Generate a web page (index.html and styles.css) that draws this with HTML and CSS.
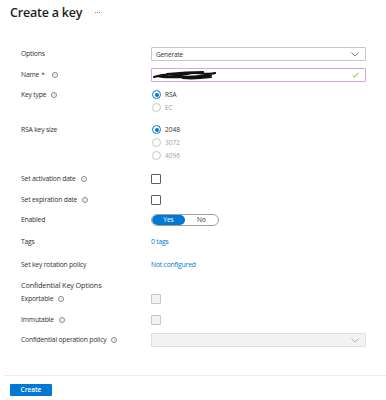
FILE: index.html
```html
<!DOCTYPE html>
<html>
<head>
<meta charset="utf-8">
<link rel="stylesheet" href="styles.css">
</head>
<body>
<div class="page">
  <div class="header">
    <h1 class="title">Create a key</h1>
    <span class="more"><i></i><i></i><i></i></span>
  </div>

  <div class="form">
    <div class="row r-options">
      <div class="label">Options</div>
      <div class="control">
        <div class="select"><span>Generate</span>
          <svg class="chev" viewBox="0 0 10 6" width="8" height="5"><path d="M0.5 0.5 L5 5 L9.5 0.5" fill="none" stroke="#605e5c" stroke-width="1"/></svg>
        </div>
      </div>
    </div>

    <div class="row r-name">
      <div class="label">Name <span class="req">*</span> <span class="info">i</span></div>
      <div class="control">
        <div class="input">
          <svg class="redact" viewBox="0 0 70 10" width="70" height="10"><path d="M1 7 C8 5 14 4 22 5 C30 6 34 3 42 3 C50 3 56 5 62 3 M4 6 C12 8 20 7 30 7 C40 7 48 6 58 5 M14 4 C24 3 36 2 50 2 M30 8 C40 9 50 8 58 7" fill="none" stroke="#111" stroke-width="2.2" stroke-linecap="round"/></svg>
          <svg class="check" viewBox="0 0 10 8" width="7" height="6"><path d="M1 4.5 L3.8 7 L9 1" fill="none" stroke="#57a300" stroke-width="1.2"/></svg>
        </div>
      </div>
    </div>

    <div class="row r-keytype">
      <div class="label">Key type <span class="info">i</span></div>
      <div class="control stack">
        <div class="radio checked"><span class="dot"></span>RSA</div>
        <div class="radio disabled"><span class="dot"></span>EC</div>
      </div>
    </div>

    <div class="row r-keysize">
      <div class="label">RSA key size</div>
      <div class="control stack">
        <div class="radio checked"><span class="dot"></span>2048</div>
        <div class="radio disabled"><span class="dot"></span>3072</div>
        <div class="radio disabled"><span class="dot"></span>4096</div>
      </div>
    </div>

    <div class="row r-act">
      <div class="label">Set activation date <span class="info">i</span></div>
      <div class="control"><span class="box"></span></div>
    </div>

    <div class="row r-exp">
      <div class="label">Set expiration date <span class="info">i</span></div>
      <div class="control"><span class="box"></span></div>
    </div>

    <div class="row r-enabled">
      <div class="label">Enabled</div>
      <div class="control">
        <div class="toggle"><span class="opt on">Yes</span><span class="opt">No</span></div>
      </div>
    </div>

    <div class="row r-tags">
      <div class="label">Tags</div>
      <div class="control"><span class="link">0 tags</span></div>
    </div>

    <div class="row r-rot">
      <div class="label">Set key rotation policy</div>
      <div class="control"><span class="link">Not configured</span></div>
    </div>

    <div class="section">Confidential Key Options</div>

    <div class="row r-export">
      <div class="label">Exportable <span class="info">i</span></div>
      <div class="control"><span class="box dis"></span></div>
    </div>

    <div class="row r-immut">
      <div class="label">Immutable <span class="info">i</span></div>
      <div class="control"><span class="box dis"></span></div>
    </div>

    <div class="row r-policy">
      <div class="label">Confidential operation policy <span class="info">i</span></div>
      <div class="control">
        <div class="select dis">
          <svg class="chev" viewBox="0 0 10 6" width="8" height="5"><path d="M0.5 0.5 L5 5 L9.5 0.5" fill="none" stroke="#a19f9d" stroke-width="1"/></svg>
        </div>
      </div>
    </div>
  </div>

  <div class="footer">
    <button class="btn">Create</button>
  </div>
</div>
</body>
</html>
```

FILE: styles.css
```css
* { box-sizing: border-box; }
html, body { margin: 0; padding: 0; background: #fff; }
body {
  font-family: "Open Sans", "Noto Sans", "Liberation Sans", sans-serif;
  color: #323130;
  width: 386px;
  height: 400px;
  overflow: hidden;
}
.page { position: relative; height: 400px; }

.header {
  display: flex;
  align-items: center;
  padding: 5px 0 0 10px;
  height: 21px;
}
.title {
  margin: 0;
  font-size: 12.5px;
  font-weight: 600;
  letter-spacing: -0.2px;
  color: #201f1e;
  line-height: 16px;
}
.more {
  margin-left: 13px;
  display: flex;
  gap: 1px;
  align-items: center;
  margin-top: -1px;
}
.more i {
  display: block;
  width: 1px;
  height: 1px;
  background: #8a8886;
}

.form {
  padding: 26px 0 0 21px;
}
.row {
  display: flex;
  align-items: flex-start;
}
.label {
  width: 130px;
  flex: none;
  font-size: 6.8px;
  line-height: 13px;
  color: #323130;
  display: flex;
  align-items: center;
  white-space: nowrap;
  letter-spacing: -0.2px;
}
.control {
  width: 215px;
  flex: none;
  font-size: 7px;
  line-height: 13px;
  min-height: 13px;
  display: flex;
  align-items: center;
}
.stack { flex-direction: column; align-items: flex-start; }

.req { color: #a4262c; margin: 0 2px 0 2px; }
.info {
  display: inline-flex;
  align-items: center;
  justify-content: center;
  width: 6px;
  height: 6px;
  border: 0.6px solid #8a8886;
  border-radius: 50%;
  font-size: 4px;
  line-height: 1;
  color: #8a8886;
  margin-left: 5px;
  font-family: "Liberation Serif", serif;
}

.select {
  width: 215px;
  height: 14px;
  border: 1px solid #c8c6c4;
  border-radius: 1px;
  display: flex;
  align-items: center;
  padding: 0 6px 0 4px;
  font-size: 6.5px;
  color: #323130;
  letter-spacing: -0.15px;
}
.select.dis { background: #f3f2f1; border-color: #e1dfdd; }
.chev { display: block; margin-left: auto; }

.input {
  width: 215px;
  height: 14px;
  border: 1px solid #d5a6e0;
  border-radius: 1px;
  display: flex;
  align-items: center;
  justify-content: space-between;
  padding: 0 6px 0 1px;
}
.redact { display: block; }
.check { display: block; }

.radio {
  display: flex;
  align-items: center;
  height: 13px;
  font-size: 6.5px;
  color: #323130;
}
.radio .dot {
  width: 9px;
  height: 9px;
  border-radius: 50%;
  border: 1px solid #8a8886;
  margin: 0 4px 0 1px;
  position: relative;
  flex: none;
}
.radio.checked .dot { border-color: #0078d4; }
.radio.checked .dot::after {
  content: "";
  position: absolute;
  left: 1.5px; top: 1.5px;
  width: 4px; height: 4px;
  border-radius: 50%;
  background: #0078d4;
}
.radio.disabled { color: #a19f9d; }
.radio.disabled .dot { border-color: #c8c6c4; }

.box {
  width: 10px;
  height: 10px;
  border: 1px solid #605e5c;
  border-radius: 1px;
  display: block;
}
.box.dis { background: #f3f2f1; border-color: #c8c6c4; }

.toggle {
  width: 68px;
  height: 12px;
  border: 1px solid #a19f9d;
  border-radius: 6px;
  display: flex;
  align-items: stretch;
  padding: 0;
  overflow: hidden;
}
.opt {
  flex: 1;
  display: flex;
  align-items: center;
  justify-content: center;
  font-size: 6.5px;
  color: #323130;
}
.opt.on {
  flex: none;
  width: 33px;
  background: #0078d4;
  color: #fff;
  border-radius: 6px;
}

.link { color: #0078d4; font-size: 6.8px; letter-spacing: -0.2px; }

.section {
  font-size: 7.3px;
  line-height: 13px;
  color: #323130;
  letter-spacing: -0.15px;
}

.r-name { margin-top: 7px; }
.r-keytype { margin-top: 6px; }
.r-keysize { margin-top: 9px; }
.r-act { margin-top: 10px; }
.r-exp { margin-top: 8px; }
.r-enabled { margin-top: 7px; }
.r-tags { margin-top: 9px; }
.r-rot { margin-top: 10px; }
.section { margin-top: 8px; }
.r-immut { margin-top: 8px; }
.r-policy { margin-top: 7px; }

.footer {
  position: absolute;
  left: 4px;
  right: 0;
  top: 375px;
  border-top: 1px solid #edebe9;
  padding: 8px 0 0 6px;
}
.btn {
  width: 42px;
  height: 12px;
  background: #0078d4;
  color: #fff;
  border: none;
  border-radius: 1px;
  font-family: inherit;
  font-size: 6.5px;
  font-weight: 600;
  padding: 0;
  line-height: 12px;
  display: block;
}
```
